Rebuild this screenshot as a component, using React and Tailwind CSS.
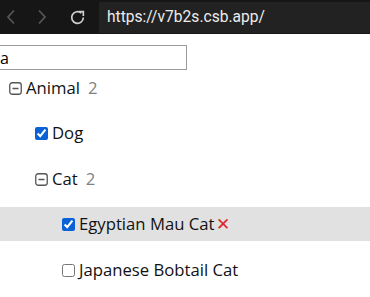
import React from 'react'

function MinusBox() {
    return (
        <svg width="13" height="13" viewBox="0 0 13 13" className="shrink-0">
            <rect x="0.75" y="0.75" width="11.5" height="11.5" rx="2.5" fill="none" stroke="#555" strokeWidth="1.3" />
            <line x1="3.5" y1="6.5" x2="9.5" y2="6.5" stroke="#555" strokeWidth="1.5" />
        </svg>
    )
}

function Check({ checked }) {
    return (
        <input
            type="checkbox"
            defaultChecked={checked}
            className="w-[13px] h-[13px] m-0 mr-[4px] accent-[#0b62d6] shrink-0"
        />
    )
}

function Row({ level, children, highlight }) {
    const pad = [9, 35, 62][level]
    return (
        <div
            className={`flex items-center h-[34px] ${highlight ? 'bg-[#e1e1e1]' : ''}`}
            style={{ paddingLeft: pad }}
        >
            {children}
        </div>
    )
}

export default function App() {
    return (
        <div className="w-[370px] h-[297px] overflow-hidden bg-white font-['Segoe_UI','Open_Sans',sans-serif] text-[16.7px]">
            <div className="flex items-center h-[34px] bg-[#161616]">
                <svg width="10" height="16" viewBox="0 0 10 16" className="ml-[6px]">
                    <path d="M8 1.5 L2 8 L8 14.5" fill="none" stroke="#555" strokeWidth="1.8" />
                </svg>
                <svg width="10" height="16" viewBox="0 0 10 16" className="ml-[21px]">
                    <path d="M2 1.5 L8 8 L2 14.5" fill="none" stroke="#555" strokeWidth="1.8" />
                </svg>
                <svg width="17" height="17" viewBox="0 0 16 16" className="ml-[22px]">
                    <path d="M13.5 8 A5.5 5.5 0 1 1 11.6 3.8" fill="none" stroke="#d0d0d0" strokeWidth="1.6" />
                    <path d="M9.5 2.5 L13.5 2.5 L13.5 6.5" fill="none" stroke="#d0d0d0" strokeWidth="1.6" />
                </svg>
                <div className="ml-[13px] flex-1 h-[31px] mt-[1px] bg-[#222222] flex items-center pl-[8px] text-[15.6px] text-[#ececec] font-['Roboto',sans-serif]">
                    https://v7b2s.csb.app/
                </div>
            </div>
            <div className="h-[11px]" />
            <input
                type="text"
                defaultValue="a"
                className="block ml-[-6px] w-[193px] h-[25px] border border-[#9a9a9a] pl-[5px] text-[16px] text-black outline-none"
            />
            <div className="mt-[1px] text-[#111]">
                <Row level={0}>
                    <MinusBox />
                    <span className="ml-[4px]">Animal</span>
                    <span className="ml-[8px] text-[#808080]">2</span>
                </Row>
                <div className="h-[11px]" />
                <Row level={1}>
                    <Check checked />
                    <span>Dog</span>
                </Row>
                <div className="h-[12px]" />
                <Row level={1}>
                    <MinusBox />
                    <span className="ml-[4px]">Cat</span>
                    <span className="ml-[8px] text-[#808080]">2</span>
                </Row>
                <div className="h-[11px]" />
                <Row level={2} highlight>
                    <Check checked />
                    <span>Egyptian Mau Cat</span>
                    <span className="text-[#e0262b] ml-[1px]">✕</span>
                </Row>
                <div className="h-[12px]" />
                <Row level={2}>
                    <Check />
                    <span>Japanese Bobtail Cat</span>
                </Row>
            </div>
        </div>
    )
}
